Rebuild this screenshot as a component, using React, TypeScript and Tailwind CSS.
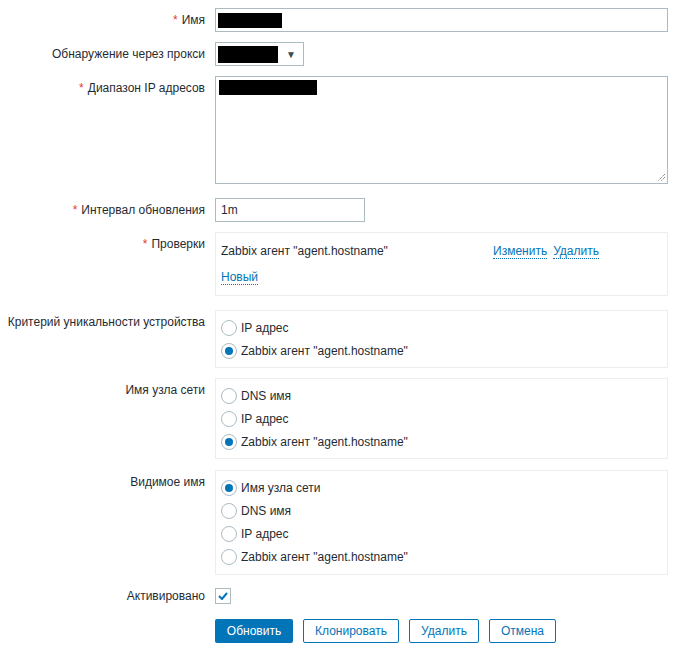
import React from 'react';

const Req = () => <span className="text-[#e33734] mr-[4px]">*</span>;

const Row = ({ label, req, className = '', children }: { label: string; req?: boolean; className?: string; children: React.ReactNode }) => (
  <div className={`flex ${className}`}>
    <div className="w-[205px] shrink-0 text-right leading-6 pr-0">
      {req && <Req />}
      {label}
    </div>
    <div className="ml-[10px] flex-1">{children}</div>
  </div>
);

const Radio = ({ checked, label }: { checked?: boolean; label: string }) => (
  <div className="flex items-center h-[23px]">
    <span className="w-4 h-4 rounded-full border border-[#acbbc2] bg-white flex items-center justify-center shrink-0">
      {checked && <span className="w-2 h-2 rounded-full bg-[#0275b8]" />}
    </span>
    <span className="ml-[4px]">{label}</span>
  </div>
);

const Link = ({ children, className = '' }: { children: React.ReactNode; className?: string }) => (
  <span className={`text-[#0275b8] border-b border-dotted border-[#0275b8] leading-[14px] ${className}`}>{children}</span>
);

export default function App() {
  return (
    <div
      className="w-[678px] h-[653px] bg-white text-[#1f2c33] text-[12px] pt-[8px] pr-[10px]"
      style={{ fontFamily: '"Liberation Sans", Arial, sans-serif' }}
    >
      <Row label="Имя" req className="mb-[10px]">
        <div className="h-6 border border-[#acbbc2] flex items-center pl-[2px]">
          <div className="w-[64px] h-[15px] bg-black" />
        </div>
      </Row>

      <Row label="Обнаружение через прокси" className="mb-[10px]">
        <div className="w-[89px] h-6 border border-[#acbbc2] flex items-center pl-[2px]">
          <div className="w-[60px] h-[17px] bg-black" />
          <span className="ml-[8px] text-[10px] text-[#3d4a51]">▼</span>
        </div>
      </Row>

      <Row label="Диапазон IP адресов" req className="mb-[14px]">
        <div className="relative h-[108px] border border-[#acbbc2] pl-[3px] pt-[3px]">
          <div className="w-[98px] h-[15px] bg-black" />
          <svg className="absolute right-[1px] bottom-[1px]" width="10" height="10" viewBox="0 0 10 10">
            <path d="M9 2 L2 9 M9 5 L5 9" stroke="#555" strokeWidth="1" strokeDasharray="1 1" fill="none" />
          </svg>
        </div>
      </Row>

      <Row label="Интервал обновления" req className="mb-[10px]">
        <div className="w-[150px] h-6 border border-[#acbbc2] flex items-center pl-[5px]">1m</div>
      </Row>

      <Row label="Проверки" req className="mb-[14px]">
        <div className="h-[64px] border border-[#ebeef0] px-[5px] pt-[8px]">
          <div className="flex items-center h-[20px]">
            <span className="w-[272px]">Zabbix агент "agent.hostname"</span>
            <Link>Изменить</Link>
            <Link className="ml-[6px]">Удалить</Link>
          </div>
          <div className="flex items-center h-[20px] mt-[6px]">
            <Link>Новый</Link>
          </div>
        </div>
      </Row>

      <Row label="Критерий уникальности устройства" className="mb-[10px]">
        <div className="border border-[#ebeef0] px-[5px] py-[5px]">
          <Radio label="IP адрес" />
          <Radio checked label='Zabbix агент "agent.hostname"' />
        </div>
      </Row>

      <Row label="Имя узла сети" className="mb-[11px]">
        <div className="border border-[#ebeef0] px-[5px] py-[5px]">
          <Radio label="DNS имя" />
          <Radio label="IP адрес" />
          <Radio checked label='Zabbix агент "agent.hostname"' />
        </div>
      </Row>

      <Row label="Видимое имя" className="mb-[13px]">
        <div className="border border-[#ebeef0] px-[5px] pt-[5px] pb-[6px]">
          <Radio checked label="Имя узла сети" />
          <Radio label="DNS имя" />
          <Radio label="IP адрес" />
          <Radio label='Zabbix агент "agent.hostname"' />
        </div>
      </Row>

      <div className="flex mb-[15px]">
        <div className="w-[205px] shrink-0 text-right leading-4">Активировано</div>
        <div className="ml-[10px]">
          <div className="w-4 h-4 border border-[#acbbc2] flex items-center justify-center">
            <svg width="10" height="8" viewBox="0 0 10 8">
              <path d="M1 4 L4 7 L9 1" stroke="#0275b8" strokeWidth="2" fill="none" />
            </svg>
          </div>
        </div>
      </div>

      <div className="flex ml-[215px] gap-[10px]">
        <button className="w-[78px] h-6 bg-[#0275b8] text-white rounded-[2px]">Обновить</button>
        <button className="w-[96px] h-6 border border-[#0275b8] text-[#0275b8] bg-white rounded-[2px]">Клонировать</button>
        <button className="w-[70px] h-6 border border-[#0275b8] text-[#0275b8] bg-white rounded-[2px]">Удалить</button>
        <button className="w-[67px] h-6 border border-[#0275b8] text-[#0275b8] bg-white rounded-[2px]">Отмена</button>
      </div>
    </div>
  );
}
